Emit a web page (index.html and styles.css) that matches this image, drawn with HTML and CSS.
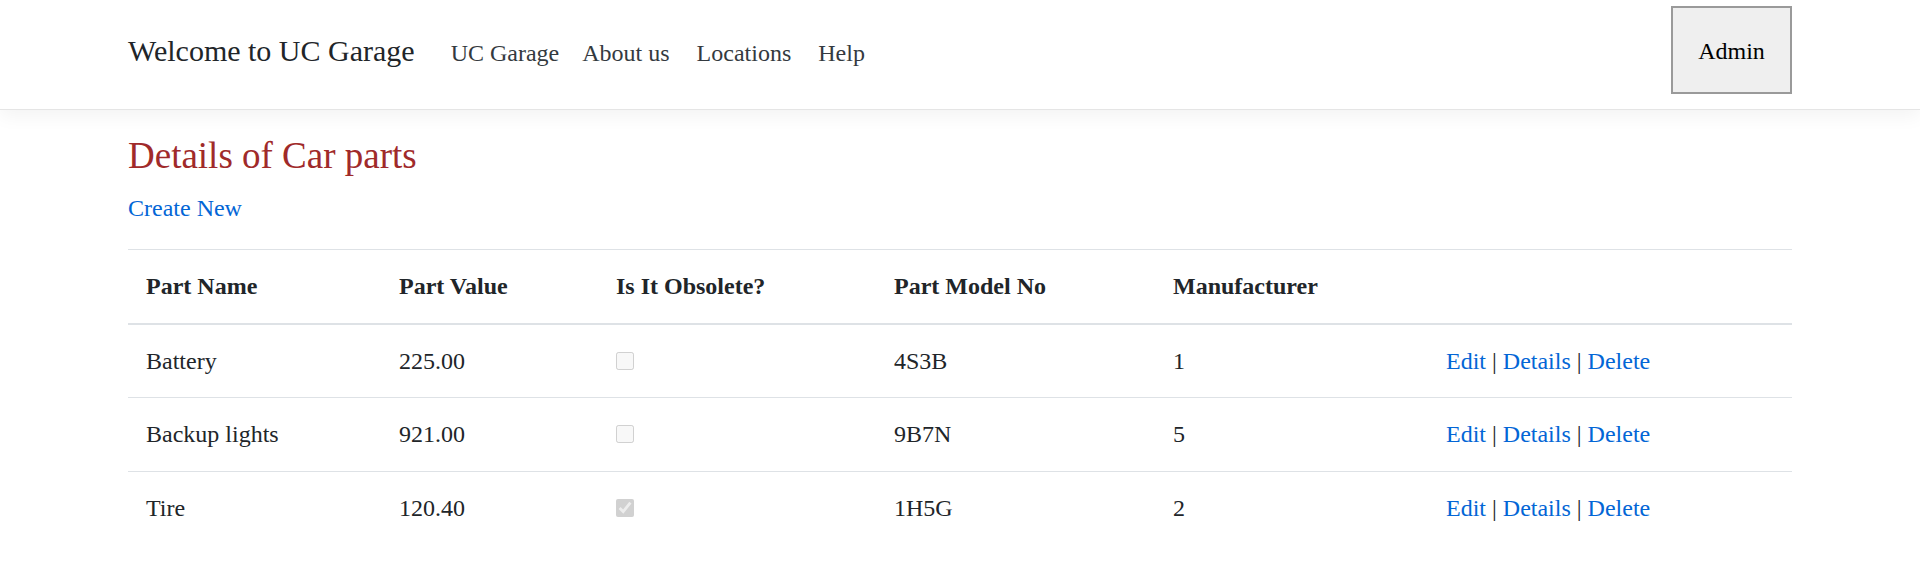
FILE: index.html
```html
<!DOCTYPE html>
<html lang="en">
<head>
<meta charset="utf-8">
<title>UC Garage</title>
<link rel="stylesheet" href="styles.css">
</head>
<body>
<header class="navbar">
  <div class="container nav-inner">
    <div class="nav-left">
      <a class="brand" href="#">Welcome to UC Garage</a>
      <nav class="nav-links">
        <a class="nav-link" href="#">UC Garage</a>
        <a class="nav-link" href="#">About us</a>
        <a class="nav-link" href="#">Locations</a>
        <a class="nav-link" href="#">Help</a>
      </nav>
    </div>
    <button class="admin-btn" type="button">Admin</button>
  </div>
</header>
<main class="container">
  <h4 class="page-title">Details of Car parts</h4>
  <p class="create"><a href="#">Create New</a></p>
  <table class="table">
    <colgroup>
      <col class="c1"><col class="c2"><col class="c3"><col class="c4"><col class="c5"><col class="c6">
    </colgroup>
    <thead>
      <tr>
        <th>Part Name</th>
        <th>Part Value</th>
        <th>Is It Obsolete?</th>
        <th>Part Model No</th>
        <th>Manufacturer</th>
        <th></th>
      </tr>
    </thead>
    <tbody>
      <tr>
        <td>Battery</td>
        <td>225.00</td>
        <td><input class="check" type="checkbox" disabled></td>
        <td>4S3B</td>
        <td>1</td>
        <td><a href="#">Edit</a> | <a href="#">Details</a> | <a href="#">Delete</a></td>
      </tr>
      <tr>
        <td>Backup lights</td>
        <td>921.00</td>
        <td><input class="check" type="checkbox" disabled></td>
        <td>9B7N</td>
        <td>5</td>
        <td><a href="#">Edit</a> | <a href="#">Details</a> | <a href="#">Delete</a></td>
      </tr>
      <tr>
        <td>Tire</td>
        <td>120.40</td>
        <td><input class="check" type="checkbox" disabled checked></td>
        <td>1H5G</td>
        <td>2</td>
        <td><a href="#">Edit</a> | <a href="#">Details</a> | <a href="#">Delete</a></td>
      </tr>
    </tbody>
  </table>
</main>
</body>
</html>
```

FILE: styles.css
```css
* { box-sizing: border-box; }
html, body { margin: 0; padding: 0; }
body {
  font-family: "Liberation Serif", "Times New Roman", serif;
  font-size: 24px;
  line-height: 1.5;
  color: #212529;
  background: #fff;
}
a { color: #0366d6; text-decoration: none; }

.container {
  width: 1664px;
  margin: 0 auto;
}

.navbar {
  border-bottom: 1px solid #e5e5e5;
  box-shadow: 0 6px 18px rgba(0, 0, 0, 0.05);
  margin-bottom: 24px;
  background: #fff;
}
.nav-inner {
  display: flex;
  align-items: center;
  justify-content: space-between;
  padding: 6px 0 15px;
}
.nav-left {
  display: flex;
  align-items: baseline;
  padding-top: 3px;
}
.brand {
  font-size: 30px;
  color: #212529;
  margin-right: 24px;
  line-height: 1.2;
}
.nav-links { display: flex; }
.nav-link {
  color: #343a40;
  padding: 0 12px;
}
.nav-link:first-child { padding-right: 11px; }
.nav-link:nth-child(2) { padding-right: 15px; }
.nav-link:nth-child(3) { padding-right: 15px; }
.admin-btn {
  width: 121px;
  height: 88px;
  font-family: "Liberation Serif", "Times New Roman", serif;
  font-size: 24px;
  color: #000;
  background: #efefef;
  border: 2px solid #9a9a9a;
  border-radius: 0;
  padding: 2px 0 0;
}

.page-title {
  font-size: 37px;
  font-weight: normal;
  line-height: 1.2;
  color: #a02a2a;
  margin: 0 0 12px;
}
.create { margin: 0 0 23px; }

.table {
  width: 100%;
  border-collapse: collapse;
  table-layout: fixed;
}
.c1 { width: 253px; }
.c2 { width: 217px; }
.c3 { width: 278px; }
.c4 { width: 279px; }
.c5 { width: 273px; }
.c6 { width: 364px; }
.table th, .table td {
  padding: 18px;
  line-height: 36.5px;
  text-align: left;
  vertical-align: top;
  border-top: 1px solid #dee2e6;
}
.table th { font-weight: bold; border-bottom: 2px solid #dee2e6; }
.check {
  width: 18px;
  height: 18px;
  margin: 0;
  vertical-align: -1px;
}
```
